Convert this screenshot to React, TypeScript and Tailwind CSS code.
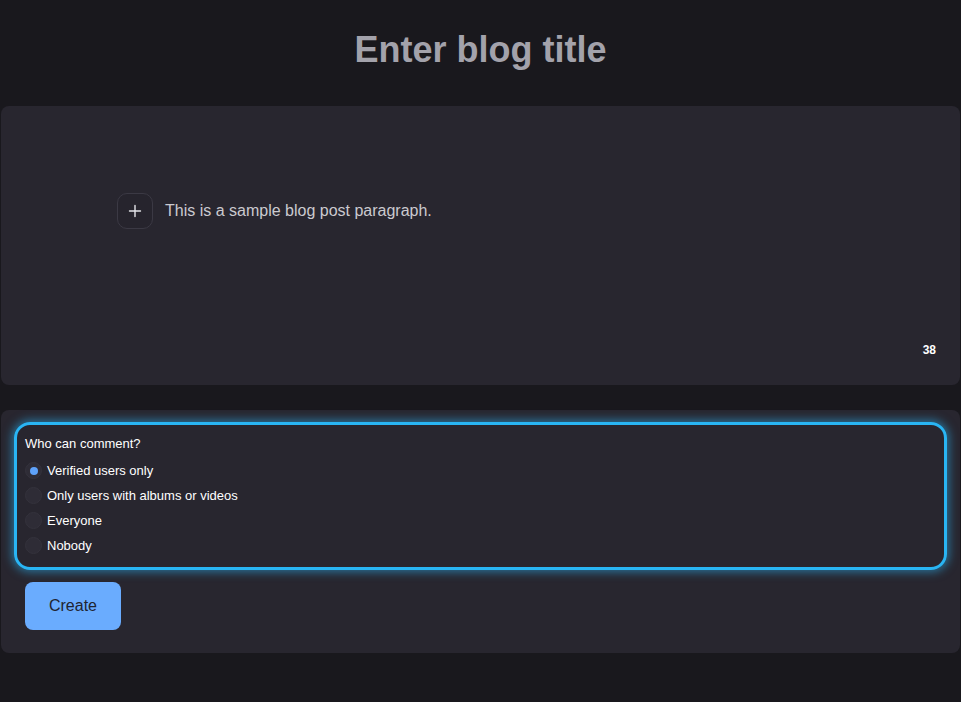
import { useState } from 'react'

const options = [
  'Verified users only',
  'Only users with albums or videos',
  'Everyone',
  'Nobody',
]

const PlusIcon = () => (
  <svg width="16" height="16" viewBox="0 0 16 16" fill="none">
    <path d="M8 2.5v11M2.5 8h11" stroke="#e5e5ea" strokeWidth="1.4" strokeLinecap="round" />
  </svg>
)

export default function App() {
  const [choice, setChoice] = useState(options[0])

  return (
    <div
      className="min-h-[702px] bg-[#19181d] px-px"
      style={{ fontFamily: '"Liberation Sans", Arial, sans-serif' }}
    >
      <h1 className="pt-[20px] pb-[26px] text-center text-[36px] font-bold leading-[60px] text-[#a3a2ab]">
        Enter blog title
      </h1>

      <div className="relative h-[279px] rounded-lg bg-[#28262f]">
        <div className="flex items-center gap-3 pl-[116px] pt-[87px]">
          <button className="flex h-[36px] w-[36px] items-center justify-center rounded-[10px] border border-[#3b3944] bg-[#26242d]">
            <PlusIcon />
          </button>
          <p className="text-base text-[#cbcad0]">This is a sample blog post paragraph.</p>
        </div>
        <span className="absolute right-[24px] bottom-[27px] text-xs font-bold text-white">38</span>
      </div>

      <div className="mt-[25px] rounded-lg bg-[#28262f] px-[13px] pt-[12px] pb-[23px]">
        <div className="rounded-[16px] border-[3px] border-[#29b5f4] px-[8px] pt-[10px] pb-[9px] shadow-[0_0_10px_2px_rgba(41,181,244,0.55)]">
          <p className="mb-[5px] text-[13px] leading-[18px] text-white">Who can comment?</p>
          <div className="flex flex-col">
            {options.map((opt) => (
              <label
                key={opt}
                className="flex h-[25px] cursor-pointer items-center gap-[5px] text-[13px] text-white"
                onClick={() => setChoice(opt)}
              >
                <span className="flex h-[17px] w-[17px] items-center justify-center rounded-full border border-[#34323c] bg-[#2e2c36]">
                  {choice === opt && <span className="h-[8px] w-[8px] rounded-full bg-[#5ea2fa]" />}
                </span>
                {opt}
              </label>
            ))}
          </div>
        </div>
        <button className="mt-[12px] ml-[11px] h-[48px] w-[96px] rounded-lg bg-[#6aacfe] text-base text-[#1f2430]">
          Create
        </button>
      </div>
    </div>
  )
}
